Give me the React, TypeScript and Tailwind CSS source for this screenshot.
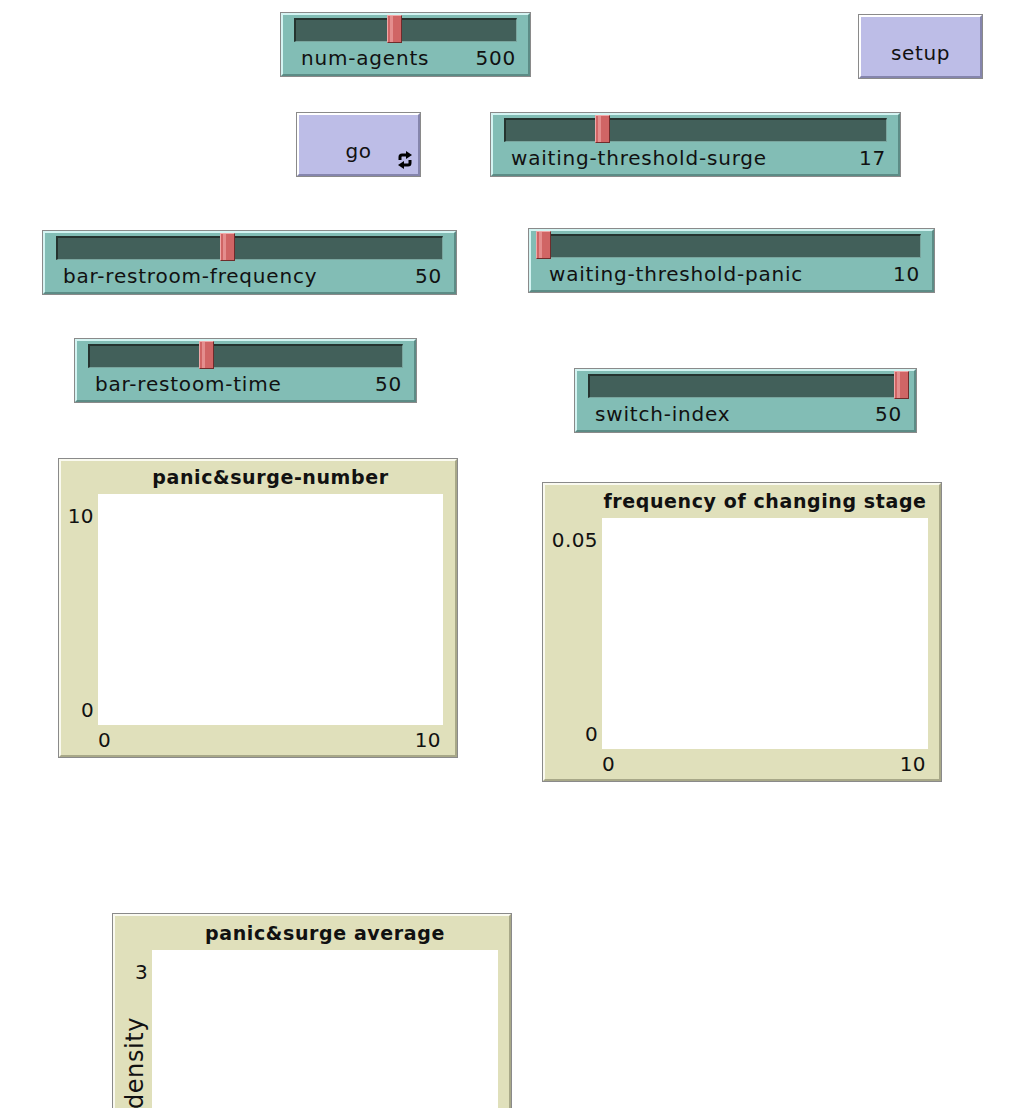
import React from "react";

const font = { fontFamily: '"DejaVu Sans", "Liberation Sans", sans-serif' };

type SliderProps = { pos: string; label: string; value: string; frac: number };

const Slider = ({ pos, label, value, frac }: SliderProps) => (
  <div className={`absolute h-[65px] border border-[#8a8a8a] bg-[#82bdb5] ${pos}`}>
    <div className="flex h-full flex-col border-2 border-t-[#d4f4f2] border-l-[#d4f4f2] border-b-[#5c8c86] border-r-[#5c8c86]">
      <div className="relative mx-[11px] mt-[3px] h-[24px] border-t-2 border-l-2 border-b border-r border-t-[#25332f] border-l-[#25332f] border-b-[#7aa59e] border-r-[#7aa59e] bg-[#42605a]">
        <div
          className="absolute top-[-5px] h-[28px] w-[15px] border border-[#6e2c2c] border-l-[#efa9a9] border-t-[#efa9a9] bg-[#d06565]"
          style={{ left: `calc(${frac * 100}% - 8px)` }}
        >
          <div className="ml-[2px] h-full w-[3px] bg-[#e48e8e]" />
        </div>
      </div>
      <div className="flex flex-1 items-center justify-between pl-[18px] pr-[12px] text-[20px] tracking-[0.8px] text-[#111]">
        <span>{label}</span>
        <span>{value}</span>
      </div>
    </div>
  </div>
);

const Forever = () => (
  <svg viewBox="0 0 16 18" className="absolute right-[5px] bottom-[5px] h-[18px] w-[16px]">
    <path d="M3 9 V6 Q3 4 5 4 H10" stroke="#000" strokeWidth="3" fill="none" />
    <polygon points="9,0 15,4 9,8" fill="#000" />
    <path d="M13 9 V12 Q13 14 11 14 H6" stroke="#000" strokeWidth="3" fill="none" />
    <polygon points="7,10 1,14 7,18" fill="#000" />
  </svg>
);

type ButtonProps = { pos: string; label: string; forever?: boolean };

const Button = ({ pos, label, forever }: ButtonProps) => (
  <div className={`absolute h-[65px] w-[125px] border border-[#8a8a8a] bg-[#bdbde7] ${pos}`}>
    <div className="relative flex h-full items-center justify-center border-2 border-t-white border-l-white border-b-[#8585ad] border-r-[#8585ad] pt-[12px] text-[20px] tracking-[0.6px] text-[#111]">
      {label}
      {forever && <Forever />}
    </div>
  </div>
);

const PlotFrame = ({ pos, children }: { pos: string; children: React.ReactNode }) => (
  <div className={`absolute h-[300px] w-[400px] border border-[#8a8a8a] bg-[#e0e0bb] ${pos}`}>
    <div className="h-full border-2 border-t-[#fafaf0] border-l-[#fafaf0] border-b-[#a8a888] border-r-[#a8a888]">
      {children}
    </div>
  </div>
);

const Title = ({ text }: { text: string }) => (
  <div className="col-start-2 flex items-center justify-center text-[19px] font-bold tracking-[0.6px] text-[#111]">
    {text}
  </div>
);

export default function App() {
  return (
    <div className="relative h-[1108px] w-[1018px] overflow-hidden bg-white" style={font}>
      <Slider pos="left-[280px] top-[12px] w-[251px]" label="num-agents" value="500" frac={0.448} />
      <Button pos="left-[858px] top-[14px]" label="setup" />
      <Button pos="left-[296px] top-[112px]" label="go" forever />
      <Slider pos="left-[490px] top-[112px] w-[411px]" label="waiting-threshold-surge" value="17" frac={0.255} />
      <Slider pos="left-[42px] top-[230px] w-[415px]" label="bar-restroom-frequency" value="50" frac={0.444} />
      <Slider pos="left-[528px] top-[228px] w-[407px]" label="waiting-threshold-panic" value="10" frac={0} />
      <Slider pos="left-[74px] top-[338px] w-[343px]" label="bar-restoom-time" value="50" frac={0.374} />
      <Slider pos="left-[574px] top-[368px] w-[343px]" label="switch-index" value="50" frac={1} />

      <PlotFrame pos="left-[58px] top-[458px]">
        <div className="grid h-full grid-cols-[37px_345px_1fr] grid-rows-[33px_231px_1fr] text-[20px] tracking-[0.4px] text-[#111]">
          <Title text="panic&surge-number" />
          <div className="col-start-1 row-start-2 flex flex-col items-end justify-between pt-[7px] pr-[4px]">
            <span>10</span>
            <span>0</span>
          </div>
          <div className="col-start-2 row-start-2 bg-white" />
          <div className="col-start-2 row-start-3 flex items-center justify-between pb-[2px] pr-[2px]">
            <span>0</span>
            <span>10</span>
          </div>
        </div>
      </PlotFrame>

      <PlotFrame pos="left-[542px] top-[482px]">
        <div className="grid h-full grid-cols-[57px_326px_1fr] grid-rows-[33px_231px_1fr] text-[20px] tracking-[0.4px] text-[#111]">
          <Title text="frequency of changing stage" />
          <div className="col-start-1 row-start-2 flex flex-col items-end justify-between pt-[7px] pr-[4px]">
            <span>0.05</span>
            <span>0</span>
          </div>
          <div className="col-start-2 row-start-2 bg-white" />
          <div className="col-start-2 row-start-3 flex items-center justify-between pb-[2px] pr-[2px]">
            <span>0</span>
            <span>10</span>
          </div>
        </div>
      </PlotFrame>

      <PlotFrame pos="left-[112px] top-[913px]">
        <div className="grid h-full grid-cols-[37px_346px_1fr] grid-rows-[34px_231px_1fr] text-[20px] tracking-[0.4px] text-[#111]">
          <Title text="panic&surge average" />
          <div className="relative col-start-1 row-start-2 flex flex-col items-end pt-[7px] pr-[4px]">
            <span>3</span>
            <span className="absolute left-[20px] top-[113px] -translate-x-1/2 -translate-y-1/2 -rotate-90 whitespace-nowrap text-[24px] tracking-[0.6px]">
              density
            </span>
          </div>
          <div className="col-start-2 row-start-2 bg-white" />
        </div>
      </PlotFrame>
    </div>
  );
}
